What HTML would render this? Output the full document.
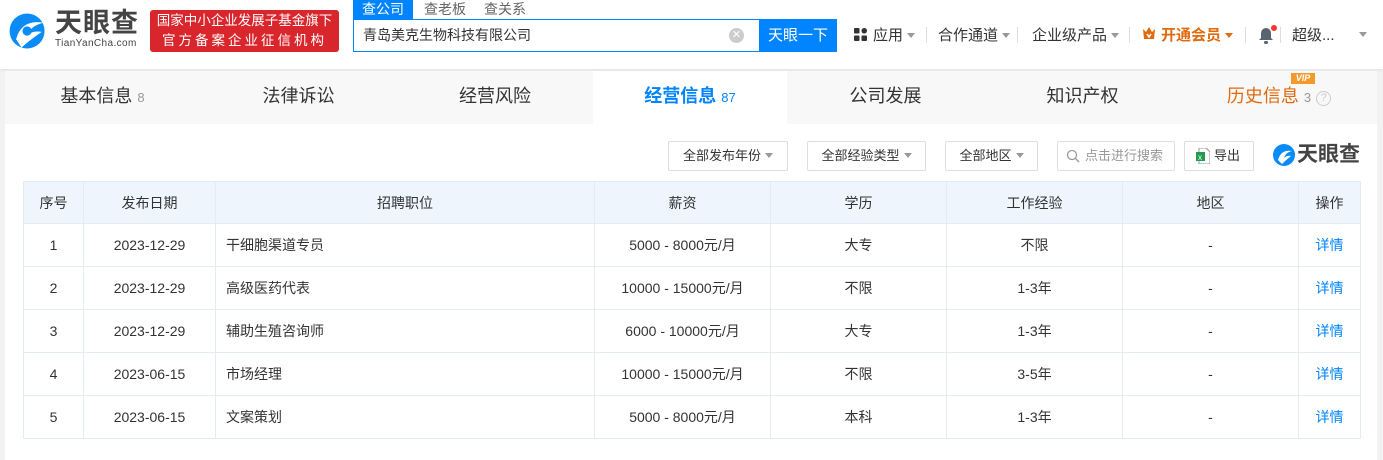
<!DOCTYPE html>
<html><head><meta charset="utf-8"><style>
*{margin:0;padding:0;box-sizing:border-box}
body{width:1383px;height:460px;overflow:hidden;background:#f2f2f2;font-family:"Liberation Sans","Noto Sans CJK SC",sans-serif;color:#333;position:relative}
.abs{position:absolute}
.hdr{left:0;top:0;width:1383px;height:69px;background:#fff;box-shadow:0 1px 4px rgba(0,0,0,.08)}
.card{left:5px;top:71px;width:1372px;height:389px;background:#fff}
.tabs{left:5px;top:71px;width:1372px;height:53px;background:#f8f8f8}
.tab{position:absolute;top:0;height:53px;line-height:50px;font-size:18px;color:#333;text-align:center}
.tab sup{font-size:13px;color:#999;vertical-align:0}
.btn{position:absolute;top:141px;height:30px;border:1px solid #ddd;border-radius:2px;font-size:13px;line-height:28px;text-align:center;color:#333;background:#fff}
.tri{display:inline-block;border:4px solid transparent;border-top:5px solid #999;border-bottom:0;vertical-align:2px;margin-left:4px}
table{position:absolute;left:23px;top:181px;border-collapse:collapse;font-size:14px}
td,th{border:1px solid #e4ebf3;height:43px;text-align:center;font-weight:normal;color:#333;padding:0}
th{background:#eef5fd;height:42px}
td.l{text-align:left;padding-left:10px}
a{color:#0084ff;text-decoration:none}
.nav{top:24px;font-size:15px;color:#333}
.sep{position:absolute;top:27px;width:1px;height:16px;background:#ddd}
</style></head><body>
<div class="abs hdr"></div>
<svg class="abs" style="left:5px;top:10px" width="46" height="42" viewBox="0 0 50 42"><circle cx="24" cy="21" r="19" fill="#0a8bf5"/><path d="M12 30 Q18 8 42 12 Q28 15 24 26 Q30 20 40 22 Q28 30 18 39 Z" fill="#fff"/><circle cx="24" cy="21" r="5" fill="#0a8bf5"/></svg>
<div class="abs" style="left:55px;top:8px;font-size:27px;line-height:30px;font-weight:bold;color:#444;letter-spacing:1px">天眼查</div>
<div class="abs" style="left:55px;top:38px;font-size:10px;line-height:11px;color:#444;letter-spacing:.4px">TianYanCha.com</div>
<div class="abs" style="left:150px;top:10px;width:189px;height:42px;background:#d9262c;border-radius:3px;color:#fff;font-size:13.5px;line-height:20px;text-align:center;padding-top:1px">国家中小企业发展子基金旗下<br><span style="letter-spacing:3px">官方备案企业征信机构</span></div>
<div class="abs" style="left:353px;top:0;width:60px;height:19px;background:#0084ff;color:#fff;font-size:14px;text-align:center;line-height:18px">查公司</div>
<div class="abs" style="left:424px;top:0;font-size:14px;color:#666;line-height:18px">查老板</div>
<div class="abs" style="left:484px;top:0;font-size:14px;color:#666;line-height:18px">查关系</div>
<div class="abs" style="left:353px;top:19px;width:406px;height:33px;border:1px solid #0084ff;border-right:0;font-size:14px;line-height:31px;padding-left:9px">青岛美克生物科技有限公司</div>
<div class="abs" style="left:729px;top:28px;width:15px;height:15px;border-radius:50%;background:#ccc;color:#fff;font-size:11px;line-height:15px;text-align:center">✕</div>
<div class="abs" style="left:759px;top:19px;width:78px;height:33px;background:#0084ff;color:#fff;font-size:15px;line-height:33px;text-align:center">天眼一下</div>
<svg class="abs" style="left:854px;top:28px" width="13" height="13"><rect width="5.5" height="5.5" rx="1" fill="#333"/><rect x="7.5" width="5.5" height="5.5" rx="2.7" fill="#333"/><rect y="7.5" width="5.5" height="5.5" rx="1" fill="#333"/><rect x="7.5" y="7.5" width="5.5" height="5.5" rx="1" fill="#333"/></svg>
<div class="abs nav" style="left:873px">应用<span class="tri"></span></div>
<div class="sep" style="left:926px"></div>
<div class="abs nav" style="left:938px">合作通道<span class="tri"></span></div>
<div class="sep" style="left:1017px"></div>
<div class="abs nav" style="left:1032px">企业级产品<span class="tri"></span></div>
<div class="sep" style="left:1129px"></div>
<svg class="abs" style="left:1142px;top:27px" width="14" height="13"><path d="M1 2 L4 5 L7 0 L10 5 L13 2 L12 12 L2 12 Z" fill="#e06a0e"/><path d="M5 7 L7 10 L9 7" stroke="#fff" stroke-width="1.5" fill="none"/></svg>
<div class="abs nav" style="left:1161px;color:#e06a0e;font-weight:bold">开通会员<span class="tri" style="border-top-color:#e06a0e"></span></div>
<div class="sep" style="left:1245px"></div>
<svg class="abs" style="left:1257px;top:25px" width="20" height="20"><path d="M2 15 L4 13 V8 A5 5 0 0 1 14 8 V13 L16 15 Z" fill="#5a6470"/><rect x="7" y="16" width="4" height="3" rx="1.5" fill="#5a6470"/><circle cx="17" cy="3" r="3" fill="#f33"/></svg>
<div class="sep" style="left:1280px"></div>
<div class="abs nav" style="left:1292px">超级...</div>
<span class="abs tri" style="left:1355px;top:32px"></span>

<div class="abs card"></div>
<div class="abs tabs"></div>
<div class="tab" style="left:5px;top:71px;width:195px">基本信息 <sup>8</sup></div>
<div class="tab" style="left:200px;top:71px;width:197px">法律诉讼</div>
<div class="tab" style="left:397px;top:71px;width:196px">经营风险</div>
<div class="tab" style="left:593px;top:71px;width:194px;background:#fff;color:#0084ff;font-weight:bold">经营信息 <sup style="color:#0084ff;font-weight:normal">87</sup></div>
<div class="tab" style="left:787px;top:71px;width:197px">公司发展</div>
<div class="tab" style="left:984px;top:71px;width:197px">知识产权</div>
<div class="tab" style="left:1181px;top:71px;width:196px;color:#e06a0e">历史信息 <sup>3</sup> <span style="display:inline-block;width:15px;height:15px;border:1.5px solid #ccc;border-radius:50%;font-size:11px;line-height:12px;color:#ccc;vertical-align:1px">?</span></div>
<div class="abs" style="left:1291px;top:73px;width:24px;height:11px;background:#f39a2b;color:#fff;font-size:9px;font-weight:bold;font-style:italic;line-height:11px;text-align:center">VIP</div>

<div class="btn" style="left:668px;width:120px">全部发布年份<span class="tri"></span></div>
<div class="btn" style="left:807px;width:119px">全部经验类型<span class="tri"></span></div>
<div class="btn" style="left:945px;width:93px">全部地区<span class="tri"></span></div>
<div class="btn" style="left:1057px;width:118px;color:#999;text-align:left;padding-left:27px">点击进行搜索</div>
<svg class="abs" style="left:1066px;top:149px" width="14" height="14"><circle cx="6" cy="6" r="4.5" stroke="#999" stroke-width="1.3" fill="none"/><path d="M9.5 9.5 L13 13" stroke="#999" stroke-width="1.3"/></svg>
<div class="btn" style="left:1184px;width:70px;text-align:left;padding-left:29px">导出</div>
<svg class="abs" style="left:1196px;top:148px" width="14" height="16"><path d="M3 0 H10 L14 4 V16 H3 Z" fill="#fff" stroke="#999"/><rect x="0" y="4" width="9" height="9" fill="#1e9e4a"/><text x="2" y="12" font-size="8" fill="#fff" font-family="Liberation Sans">x</text></svg>
<svg class="abs" style="left:1272px;top:143px" width="24" height="24"><circle cx="12" cy="12" r="11" fill="#0a8bf5"/><path d="M6 17 Q9 6 20 8 Q14 9 12 15 Q15 12 19 13 Q14 17 10 21 Z" fill="#fff"/></svg>
<div class="abs" style="left:1297px;top:142px;font-size:21px;line-height:26px;font-weight:bold;color:#444">天眼查</div>

<table>
<tr><th style="width:60px">序号</th><th style="width:132px">发布日期</th><th style="width:379px">招聘职位</th><th style="width:176px">薪资</th><th style="width:176px">学历</th><th style="width:176px">工作经验</th><th style="width:176px">地区</th><th style="width:62px">操作</th></tr>
<tr><td>1</td><td>2023-12-29</td><td class="l">干细胞渠道专员</td><td>5000 - 8000元/月</td><td>大专</td><td>不限</td><td>-</td><td><a>详情</a></td></tr>
<tr><td>2</td><td>2023-12-29</td><td class="l">高级医药代表</td><td>10000 - 15000元/月</td><td>不限</td><td>1-3年</td><td>-</td><td><a>详情</a></td></tr>
<tr><td>3</td><td>2023-12-29</td><td class="l">辅助生殖咨询师</td><td>6000 - 10000元/月</td><td>大专</td><td>1-3年</td><td>-</td><td><a>详情</a></td></tr>
<tr><td>4</td><td>2023-06-15</td><td class="l">市场经理</td><td>10000 - 15000元/月</td><td>不限</td><td>3-5年</td><td>-</td><td><a>详情</a></td></tr>
<tr><td>5</td><td>2023-06-15</td><td class="l">文案策划</td><td>5000 - 8000元/月</td><td>本科</td><td>1-3年</td><td>-</td><td><a>详情</a></td></tr>
</table>
</body></html>
